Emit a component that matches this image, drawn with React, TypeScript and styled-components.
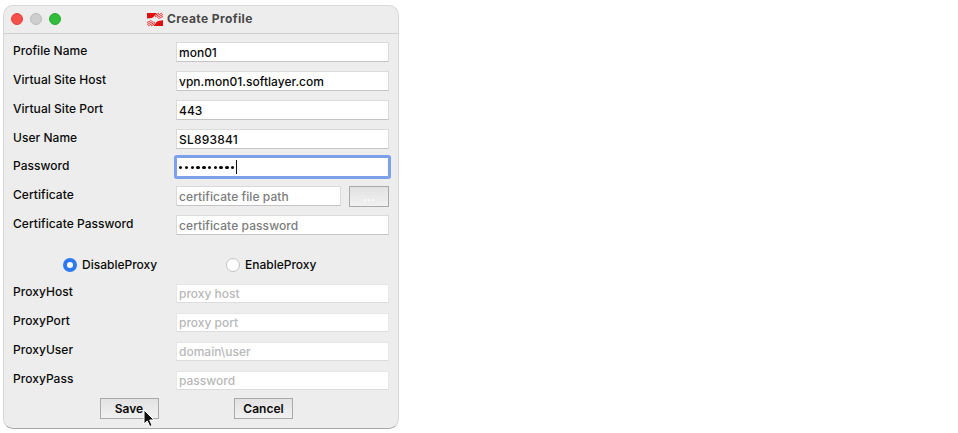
import React from 'react';
import styled, { createGlobalStyle, css } from 'styled-components';

const GlobalStyle = createGlobalStyle`
  * { box-sizing: border-box; }
  body { margin: 0; background: #fff; overflow: hidden; }
`;

const Desktop = styled.main`
  height: 433px;
  padding: 5px 0 0 3px;
  font: 550 12px/18px Inter, sans-serif;
  color: #0a0a0a;
`;

const Dialog = styled.section`
  width: 396px;
  height: 424px;
  border: 1px solid #d8d8d8;
  border-bottom-color: #a8a8a8;
  border-radius: 10px;
  background: #ededed;
  overflow: hidden;
`;

const TitleBar = styled.header`
  display: flex;
  align-items: center;
  height: 28px;
  padding: 0 0 1px 7px;
  border-bottom: 1px solid #d0d0d0;
`;

const Light = styled.span<{ $fill: string; $edge: string }>`
  width: 12px;
  height: 12px;
  margin-right: 7.2px;
  border: 1px solid ${(p) => p.$edge};
  border-radius: 50%;
  background: ${(p) => p.$fill};
`;

const Title = styled.h1`
  display: flex;
  align-items: center;
  gap: 4px;
  margin: 0 0 0 78.4px;
  font-size: 12px;
  font-weight: 700;
  color: #484848;
  white-space: nowrap;
  letter-spacing: 0.4px;
`;

const Form = styled.form`
  padding: 3px 9px 0;
`;

const Row = styled.div`
  display: flex;
  align-items: flex-start;
  height: 29px;
`;

const Label = styled.label<{ $raised?: boolean }>`
  flex: 0 0 163px;
  padding-top: ${(p) => (p.$raised ? 3.5 : 5)}px;
  white-space: nowrap;
  letter-spacing: 0.04px;
`;

type Tone = 'value' | 'hint' | 'disabled';
const inks: Record<Tone, string> = { value: '#0a0a0a', hint: '#7c7c7c', disabled: '#b8b8b8' };

const Field = styled.div<{ $tone: Tone; $short?: boolean; $focus?: boolean; $spacing?: number }>`
  display: flex;
  align-items: center;
  width: ${(p) => (p.$short ? 165 : 213)}px;
  height: ${(p) => (p.$tone === 'disabled' ? 19 : 20)}px;
  margin-top: ${(p) => (p.$tone === 'hint' ? 4 : 5)}px;
  padding: ${(p) => (p.$tone === 'disabled' ? 0 : 1)}px 0 0 2px;
  border: 1px solid ${(p) => (p.$tone === 'disabled' ? '#e6e6e6' : '#dadada')};
  border-bottom-color: ${(p) => (p.$tone === 'disabled' ? '#dcdcdc' : '#c4c4c4')};
  background: #fff;
  color: ${(p) => inks[p.$tone]};
  font-weight: ${(p) => (p.$tone === 'value' ? 550 : 450)};
  letter-spacing: ${(p) => p.$spacing ?? 0}px;
  white-space: nowrap;
  ${(p) =>
    p.$focus &&
    css`
      margin-top: 4px;
      border-color: #7da0ea;
      border-radius: 1px;
      box-shadow: 0 0 0 2px #7da0ea;
    `}
`;

const Bullet = styled.span`
  width: 3.4px;
  height: 3.4px;
  margin-right: 2.4px;
  border-radius: 50%;
  background: #0a0a0a;
`;

const Caret = styled.span`
  width: 1px;
  height: 14px;
  margin: -2px 0 0 -1px;
  background: #111;
`;

const Radios = styled.div`
  display: flex;
  align-items: center;
  height: 39px;
  padding: 9px 0 0 50px;
`;

const Choice = styled.label`
  display: flex;
  align-items: center;
  gap: 5px;
  width: 164px;
  padding-top: 1px;
  white-space: nowrap;
`;

const Dot = styled.span<{ $on?: boolean }>`
  width: 14px;
  height: 14px;
  border: ${(p) => (p.$on ? '4.3px solid #2c79f2' : '1px solid #c2c2c2')};
  border-radius: 50%;
  background: #fff;
`;

const Button = styled.button<{ $browse?: boolean }>`
  width: ${(p) => (p.$browse ? 40 : 59)}px;
  height: 21px;
  margin: ${(p) => (p.$browse ? '4px 0 0 8.5px' : '0')};
  padding: 0;
  border: 1px solid #a9a9a9;
  background: linear-gradient(#e2e2e2, #f1f1f1);
  color: ${(p) => (p.$browse ? '#fff' : '#0a0a0a')};
  font: 600 12px/18px Inter, sans-serif;
`;

const Actions = styled.footer`
  display: flex;
  gap: 75.5px;
  padding: 3px 0 0 86.5px;
`;

const Pointer = styled.svg`
  position: absolute;
  left: 143px;
  top: 409px;
`;

const BrandIcon = () => (
  <svg width="16" height="15" viewBox="0 0 16 15">
    <path fill="#e00f12" d="M0 1h10L8.500 2.600 7 4.500 5 6 0 6.500z" />
    <path fill="#e00f12" d="M16 14H6.500L8 12.300l1-1.800L11 9l5-.7z" />
    <path
      stroke="#e6383a"
      strokeWidth="1"
      fill="none"
      d="m8 3.500 4-2.500M8 5l7-4M10 5.500 16 2.500M11.500 6.500 16 4.500M8 11.500 4 14M8 10 1 14M6 9.500 0 12.500M4.500 8.500 0 10.500"
    />
  </svg>
);

type FieldSpec = { label: string; text: string; tone: Tone; spacing?: number };

const account: FieldSpec[] = [
  { label: 'Profile Name', text: 'mon01', tone: 'value' },
  { label: 'Virtual Site Host', text: 'vpn.mon01.softlayer.com', tone: 'value', spacing: 0.03 },
  { label: 'Virtual Site Port', text: '443', tone: 'value' },
  { label: 'User Name', text: 'SL893841', tone: 'value', spacing: 0.2 },
];

const proxy: FieldSpec[] = [
  { label: 'ProxyHost', text: 'proxy host', tone: 'disabled' },
  { label: 'ProxyPort', text: 'proxy port', tone: 'disabled' },
  { label: 'ProxyUser', text: 'domain\\user', tone: 'disabled' },
  { label: 'ProxyPass', text: 'password', tone: 'disabled' },
];

const FieldRow = ({ label, text, tone, spacing }: FieldSpec) => (
  <Row>
    <Label $raised={tone !== 'value'}>{label}</Label>
    <Field $tone={tone} $spacing={spacing}>{text}</Field>
  </Row>
);

export default function App() {
  return (
    <Desktop>
      <GlobalStyle />
      <Dialog>
        <TitleBar>
          <Light $fill="#f5504a" $edge="#de453f" />
          <Light $fill="#cecece" $edge="#bababa" />
          <Light $fill="#2fbd3b" $edge="#27a932" />
          <Title>
            <BrandIcon />
            Create Profile
          </Title>
        </TitleBar>
        <Form>
          {account.map((f) => <FieldRow key={f.label} {...f} />)}
          <Row>
            <Label $raised>Password</Label>
            <Field $tone="value" $focus>
              {Array.from({ length: 10 }, (_, i) => <Bullet key={i} />)}
              <Caret />
            </Field>
          </Row>
          <Row>
            <Label $raised>Certificate</Label>
            <Field $tone="hint" $short $spacing={0.08}>certificate file path</Field>
            <Button type="button" $browse>...</Button>
          </Row>
          <FieldRow label="Certificate Password" text="certificate password" tone="hint" spacing={0.08} />
          <Radios>
            <Choice><Dot $on />DisableProxy</Choice>
            <Choice><Dot />EnableProxy</Choice>
          </Radios>
          {proxy.map((f) => <FieldRow key={f.label} {...f} />)}
          <Actions>
            <Button type="button">Save</Button>
            <Button type="button">Cancel</Button>
          </Actions>
        </Form>
      </Dialog>
      <Pointer width="12" height="19" viewBox="0 0 12 19">
        <path fill="#111" stroke="#fff" d="M1 1v14l3.300-3 2.500 5.500 2.300-1L6.700 11H11z" />
      </Pointer>
    </Desktop>
  );
}
